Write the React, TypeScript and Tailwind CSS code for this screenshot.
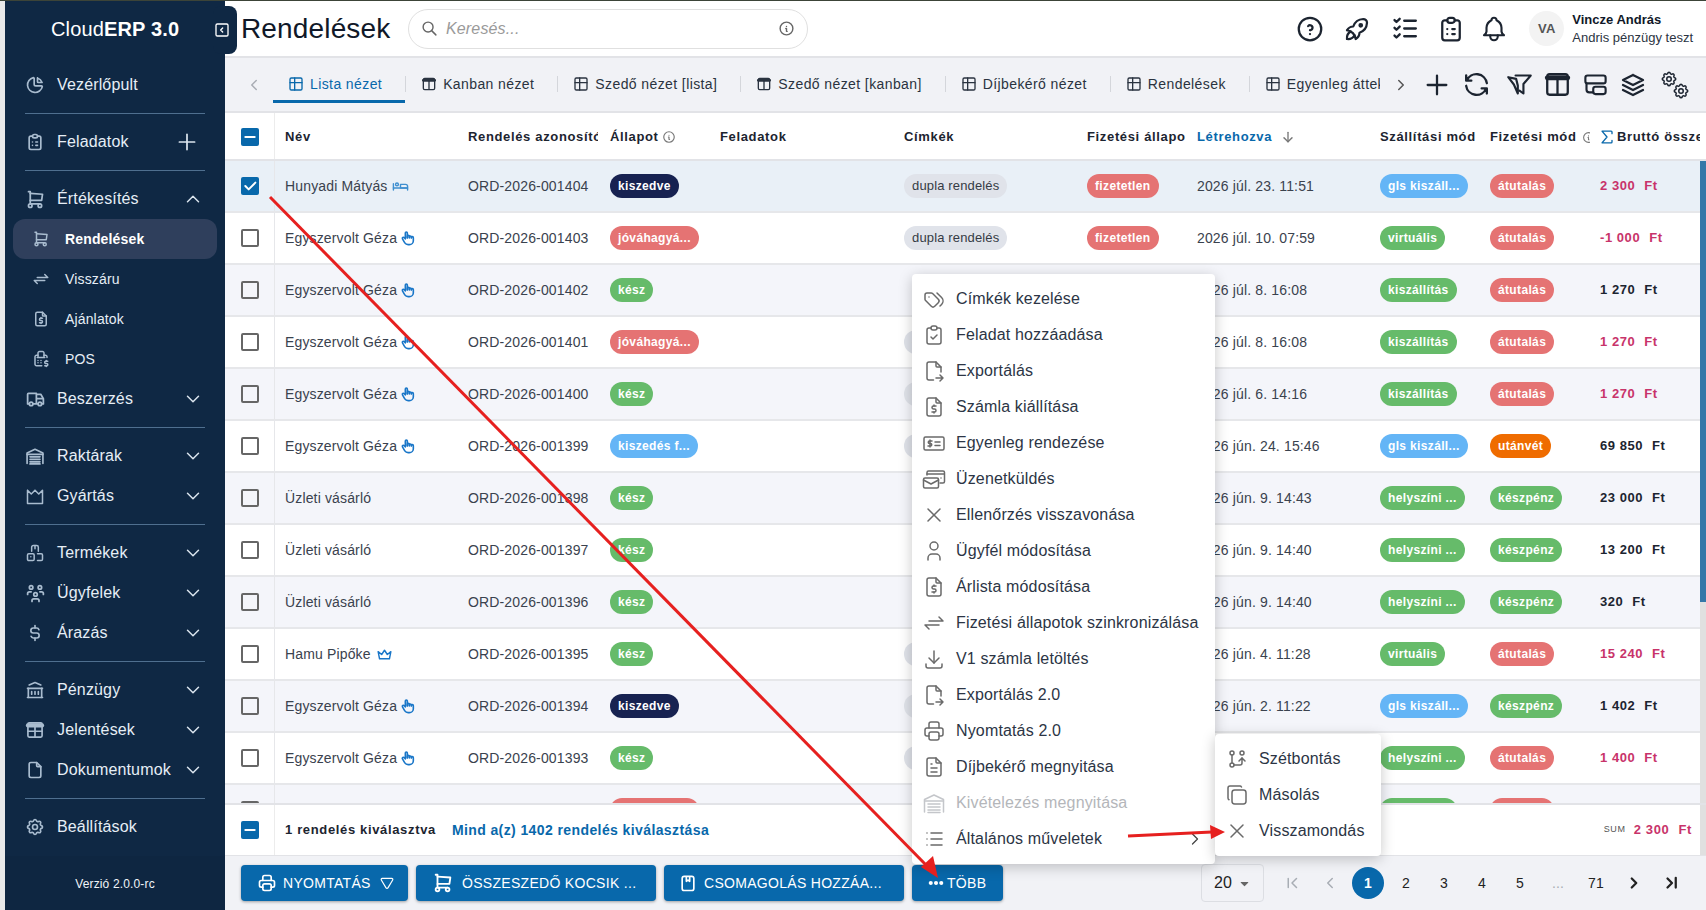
import type { ReactNode } from "react";
import {
  TbBed, TbBell, TbBuildingBank, TbCheck, TbChartPie, TbChevronDown, TbChevronLeft,
  TbChevronLeftPipe, TbChevronRight, TbChevronRightPipe, TbChevronUp, TbClipboardCheck, TbClipboardList, TbCopy, TbCrown,
  TbCurrencyDollar, TbArrowDown, TbArrowsExchange, TbCashRegister, TbDots, TbFile, TbFileDollar, TbFileExport, TbFileText,
  TbGitBranch, TbHandFinger, TbHelpCircle, TbInfoCircle, TbList, TbListCheck,
  TbMinus, TbPlus, TbPrinter, TbRefresh, TbRocket, TbSearch, TbSettings, TbShoppingCart,
  TbSquareChevronLeft, TbStack2, TbTable, TbTags, TbTruck, TbUser, TbUsersGroup, TbX, TbDownload, TbCaretDownFilled,
  TbTriangleInverted, TbSum,
} from "react-icons/tb";

const Svg = ({ size, children, width = 2 }: { size: number; children: ReactNode; width?: number }) => (
  <svg width={size} height={size} viewBox="0 0 24 24" fill="none" stroke="currentColor" strokeWidth={width} strokeLinecap="round" strokeLinejoin="round">
    {children}
  </svg>
);

const WarehouseIcon = ({ size, width }: { size: number; width?: number }) => (
  <Svg size={size} width={width}>
    <path d="M2.5 21V8.5L12 4l9.500 4.500V21" />
    <path d="M2.500 10h19M6 13h12M6 16h12M6 19h12M6 21.500h12" />
  </Svg>
);

const FactoryIcon = ({ size }: { size: number }) => (
  <Svg size={size} width={1.8}>
    <path d="M3 5v16h18V5l-4.500 4.500L12 5 7.500 9.500z" />
  </Svg>
);

const BoxesIcon = ({ size }: { size: number }) => (
  <Svg size={size} width={1.8}>
    <rect x="3" y="13" width="8" height="8" rx="1.500" />
    <path d="M15 13h4.500a1.500 1.500 0 0 1 1.500 1.500v5a1.500 1.500 0 0 1-1.500 1.500H15" />
    <path d="M8 10V5a2 2 0 0 1 2-2h4a2 2 0 0 1 2 2v5" />
    <path d="M7 16.500h0M12 3v4" />
  </Svg>
);

const GridIcon = ({ size }: { size: number }) => (
  <Svg size={size}>
    <rect x="3.500" y="3.500" width="17" height="17" rx="1.500" fill="none" />
    <path d="M3.500 6.500h17" strokeWidth="5" />
    <path d="M3.500 13.500h17M12 6.500v14" />
  </Svg>
);

const ColumnsIcon = ({ size, width }: { size: number; width?: number }) => (
  <Svg size={size} width={width}>
    <rect x="3.500" y="3.500" width="17" height="17" rx="2" />
    <path d="M3.500 6.500h17" strokeWidth="4" />
    <path d="M12 8v12" />
  </Svg>
);

const SplitFilterIcon = ({ size }: { size: number }) => (
  <Svg size={size} width={1.9}>
    <path d="M8.500 4H22l-6.500 7.500V20l-3.500-2.500" />
    <path d="M2 5.500l7 1.500 1.500 6v7l-3.500-8z" />
  </Svg>
);

const BlocksIcon = ({ size }: { size: number }) => (
  <Svg size={size} width={1.9}>
    <rect x="3" y="4" width="18" height="7" rx="2" />
    <rect x="10" y="14" width="11" height="6.500" rx="2" />
    <path d="M4 11v5.500a2.500 2.500 0 0 0 2.500 2.500H10" />
  </Svg>
);

const BalanceIcon = ({ size }: { size: number }) => (
  <Svg size={size} width={1.5}>
    <rect x="2" y="6" width="20" height="13" rx="1.500" />
    <path d="M10 10H7.500a1.200 1.200 0 0 0 0 2.500h1a1.200 1.200 0 0 1 0 2.500H6M8 9v7M13 11h5M13 14.500h5" />
  </Svg>
);

const MessagesIcon = ({ size }: { size: number }) => (
  <Svg size={size} width={1.5}>
    <path d="M5 8V5.500A1.500 1.500 0 0 1 6.500 4H21a1.500 1.500 0 0 1 1.500 1.500v9A1.500 1.500 0 0 1 21 16h-3" />
    <path d="M5 7h17" />
    <rect x="1.500" y="11" width="15" height="10" rx="1.500" />
    <path d="M1.500 13l7.500 4 7.500-4M19 11h0" />
  </Svg>
);

const NavItem = ({ icon, label, chevron, plus }: { icon: ReactNode; label: string; chevron?: "up" | "down"; plus?: boolean }) => (
  <div className="flex h-10 items-center pl-5 pr-[21px] text-[16px] text-[#e6eef6]">
    <span className="flex w-[32px] shrink-0 text-[#a9bccf]">{icon}</span>
    <span className="flex-1 whitespace-nowrap">{label}</span>
    {chevron === "down" && <TbChevronDown size={22} strokeWidth={1.6} className="text-[#dbe5ee]" />}
    {chevron === "up" && <TbChevronUp size={22} strokeWidth={1.6} className="text-[#dbe5ee]" />}
    {plus && <TbPlus size={26} strokeWidth={1.6} className="mr-[4px] text-[#dbe5ee]" />}
  </div>
);

const SubItem = ({ icon, label, active }: { icon: ReactNode; label: string; active?: boolean }) => (
  <div className={`mx-2 flex h-10 items-center rounded-xl pl-[19px] text-[14px] ${active ? "bg-[#2f3f5c] font-bold text-white" : "text-[#e6eef6]"}`}>
    <span className="flex w-[33px] shrink-0 text-[#a9bccf]">{icon}</span>
    {label}
  </div>
);

const Divider = () => <div className="mx-5 my-2 border-t border-[#4f6f8f]" />;

function Sidebar() {
  return (
    <aside className="relative flex w-[220px] shrink-0 flex-col bg-[#0f2844]">
      <div className="flex h-[64px] shrink-0 items-start pl-[46px] pt-[16px] text-[20px] leading-6 text-white">
        Cloud<b>ERP 3.0</b>
      </div>
      <div className="absolute right-[-12px] top-[5px] flex h-[48px] w-[24px] items-center justify-end rounded-lg bg-[#0f2844] pr-[7px] text-white">
        <TbSquareChevronLeft size={16} />
      </div>
      <NavItem icon={<TbChartPie size={20} />} label="Vezérlőpult" />
      <Divider />
      <NavItem icon={<TbClipboardList size={20} />} label="Feladatok" plus />
      <Divider />
      <NavItem icon={<TbShoppingCart size={21} />} label="Értékesítés" chevron="up" />
      <SubItem icon={<TbShoppingCart size={18} />} label="Rendelések" active />
      <SubItem icon={<TbArrowsExchange size={18} />} label="Visszáru" />
      <SubItem icon={<TbFileDollar size={18} />} label="Ajánlatok" />
      <SubItem icon={<TbCashRegister size={18} />} label="POS" />
      <NavItem icon={<TbTruck size={21} />} label="Beszerzés" chevron="down" />
      <Divider />
      <NavItem icon={<WarehouseIcon size={20} />} label="Raktárak" chevron="down" />
      <NavItem icon={<FactoryIcon size={20} />} label="Gyártás" chevron="down" />
      <Divider />
      <NavItem icon={<BoxesIcon size={20} />} label="Termékek" chevron="down" />
      <NavItem icon={<TbUsersGroup size={21} />} label="Ügyfelek" chevron="down" />
      <NavItem icon={<TbCurrencyDollar size={20} />} label="Árazás" chevron="down" />
      <Divider />
      <NavItem icon={<TbBuildingBank size={20} />} label="Pénzügy" chevron="down" />
      <NavItem icon={<GridIcon size={20} />} label="Jelentések" chevron="down" />
      <NavItem icon={<TbFile size={20} />} label="Dokumentumok" chevron="down" />
      <Divider />
      <NavItem icon={<TbSettings size={20} />} label="Beállítások" />
      <div className="mt-[9px] flex flex-1 items-center justify-center bg-[#0e2641] pt-[2px] text-[12px] text-[#f0f4f8]">
        Verzió 2.0.0-rc
      </div>
    </aside>
  );
}

function TopBar() {
  return (
    <header className="flex h-[57px] shrink-0 items-center border-b-2 border-[#e2e3e7] bg-white pl-4">
      <h1 className="w-[167px] text-[28px] text-[#101828]">Rendelések</h1>
      <div className="flex h-10 w-[400px] items-center rounded-full border border-[#e0e0e0] px-3">
        <TbSearch size={17} className="text-[#666]" />
        <span className="ml-[8px] flex-1 text-[16px] italic text-[#9a9a9a]">Keresés...</span>
        <TbInfoCircle size={17} className="text-[#666]" />
      </div>
      <div className="ml-auto flex items-center pr-[13px] text-[#1c2430]">
        <TbHelpCircle size={30} strokeWidth={1.8} />
        <TbRocket size={30} strokeWidth={1.8} className="ml-[17px]" />
        <TbListCheck size={31} strokeWidth={1.8} className="ml-[18px]" />
        <TbClipboardList size={30} strokeWidth={1.8} className="ml-[15px]" />
        <TbBell size={30} strokeWidth={1.7} className="ml-[13px]" />
        <div className="ml-[20px] flex size-[35px] items-center justify-center rounded-full bg-[#f3f3f3] text-[13px] font-bold text-[#555]">VA</div>
        <div className="ml-[8px] text-[13px] leading-[18px] tracking-normal">
          <div className="font-bold text-[#101828]">Vincze András</div>
          <div className="text-[#2b3442]">Andris pénzügy teszt</div>
        </div>
      </div>
    </header>
  );
}

const Tab = ({ icon, label, active }: { icon: ReactNode; label: string; active?: boolean }) => (
  <div className={`flex h-[44px] shrink-0 items-center gap-[6px] whitespace-nowrap border-b-[3px] pl-[15px] pr-[23px] pt-[9px] text-[14px] tracking-[0.4px] ${active ? "border-[#0868ab] text-[#0868ab]" : "border-transparent text-[#2a3340]"}`}>
    {icon}
    {label}
  </div>
);

const Sep = () => <div className="mt-[6px] h-4 w-px shrink-0 bg-[#d4d6db]" />;

function Tabs() {
  return (
    <div className="flex h-[55px] shrink-0 items-center border-b-2 border-[#e2e3e7] bg-[#f1f2f6] pl-[20px] pr-[16px]">
      <TbChevronLeft size={18} className="shrink-0 text-[#a9adb4]" />
      <div className="ml-[10px] mt-[1px] flex h-[44px] w-[1107px] items-center self-start overflow-hidden">
        <Tab active icon={<TbTable size={16} />} label="Lista nézet" />
        <Sep />
        <Tab icon={<ColumnsIcon size={16} />} label="Kanban nézet" />
        <Sep />
        <Tab icon={<TbTable size={16} />} label="Szedő nézet [lista]" />
        <Sep />
        <Tab icon={<ColumnsIcon size={16} />} label="Szedő nézet [kanban]" />
        <Sep />
        <Tab icon={<TbTable size={16} />} label="Díjbekérő nézet" />
        <Sep />
        <Tab icon={<TbTable size={16} />} label="Rendelések" />
        <Sep />
        <Tab icon={<TbTable size={16} />} label="Egyenleg áttekintés" />
      </div>
      <TbChevronRight size={18} className="ml-[12px] shrink-0 text-[#555]" />
      <div className="ml-auto flex items-center gap-[13px] text-[#1c2430]">
        <TbPlus size={32} strokeWidth={1.7} className="-mx-[3px]" />
        <TbRefresh size={31} strokeWidth={1.8} className="-mx-[2px]" />
        <div className="-mr-[3px] ml-[3px]"><SplitFilterIcon size={27} /></div>
        <ColumnsIcon size={29} width={1.9} />
        <div className="-ml-[3px]"><BlocksIcon size={27} /></div>
        <TbStack2 size={30} strokeWidth={1.8} className="-ml-[4px]" />
        <div className="relative -ml-[1px] size-[30px]">
          <TbSettings size={18} className="absolute left-0 top-0" />
          <TbSettings size={18} className="absolute bottom-0 right-0" />
        </div>
      </div>
    </div>
  );
}

type PillTone = "navy" | "red" | "green" | "blue" | "orange";

const toneClass: Record<PillTone, string> = {
  navy: "bg-[#172251]",
  red: "bg-[#e57373]",
  green: "bg-[#66bb6a]",
  blue: "bg-[#64b5f6]",
  orange: "bg-[#ef6c00]",
};

const Pill = ({ tone, text }: { tone: PillTone; text: string }) => (
  <span className={`inline-flex h-6 items-center whitespace-nowrap rounded-full px-2 text-[12px] font-bold tracking-[0.35px] text-white ${toneClass[tone]}`}>{text}</span>
);

const Tag = () => (
  <span className="inline-flex h-6 items-center whitespace-nowrap rounded-full bg-[#e0e3ea] px-2 text-[13px] text-[#353b45]">dupla rendelés</span>
);

const Check = ({ state }: { state?: "on" | "mixed" }) =>
  state ? (
    <span className="flex size-[18px] items-center justify-center rounded-[2px] bg-[#0868ab] text-white">
      {state === "on" ? <TbCheck size={16} strokeWidth={3} /> : <TbMinus size={16} strokeWidth={3} />}
    </span>
  ) : (
    <span className="size-[18px] rounded-[2px] border-2 border-[#666]" />
  );

type OrderRow = {
  name: string;
  mark: "bed" | "hand" | "crown" | null;
  id: string;
  status: [PillTone, string];
  tag?: boolean;
  unpaid?: boolean;
  date: string;
  ship: [PillTone, string];
  pay: [PillTone, string];
  total: string;
  red: boolean;
};

const geza = "Egyszervolt Géza";
const uzleti = "Üzleti vásárló";
const approve: [PillTone, string] = ["red", "jóváhagyá..."];
const ready: [PillTone, string] = ["green", "kész"];
const picked: [PillTone, string] = ["navy", "kiszedve"];
const gls: [PillTone, string] = ["blue", "gls kiszáll..."];
const delivery: [PillTone, string] = ["green", "kiszállítás"];
const onsite: [PillTone, string] = ["green", "helyszíni ..."];
const virtual: [PillTone, string] = ["green", "virtuális"];
const transfer: [PillTone, string] = ["red", "átutalás"];
const cash: [PillTone, string] = ["green", "készpénz"];

const rows: OrderRow[] = [
  { name: "Hunyadi Mátyás", mark: "bed", id: "001404", status: picked, tag: true, unpaid: true, date: "2026 júl. 23. 11:51", ship: gls, pay: transfer, total: "2 300", red: true },
  { name: geza, mark: "hand", id: "001403", status: approve, tag: true, unpaid: true, date: "2026 júl. 10. 07:59", ship: virtual, pay: transfer, total: "-1 000", red: true },
  { name: geza, mark: "hand", id: "001402", status: ready, date: "2026 júl. 8. 16:08", ship: delivery, pay: transfer, total: "1 270", red: false },
  { name: geza, mark: "hand", id: "001401", status: approve, tag: true, date: "2026 júl. 8. 16:08", ship: delivery, pay: transfer, total: "1 270", red: true },
  { name: geza, mark: "hand", id: "001400", status: ready, tag: true, date: "2026 júl. 6. 14:16", ship: delivery, pay: transfer, total: "1 270", red: true },
  { name: geza, mark: "hand", id: "001399", status: ["blue", "kiszedés f..."], tag: true, date: "2026 jún. 24. 15:46", ship: gls, pay: ["orange", "utánvét"], total: "69 850", red: false },
  { name: uzleti, mark: null, id: "001398", status: ready, date: "2026 jún. 9. 14:43", ship: onsite, pay: cash, total: "23 000", red: false },
  { name: uzleti, mark: null, id: "001397", status: ready, date: "2026 jún. 9. 14:40", ship: onsite, pay: cash, total: "13 200", red: false },
  { name: uzleti, mark: null, id: "001396", status: ready, date: "2026 jún. 9. 14:40", ship: onsite, pay: cash, total: "320", red: false },
  { name: "Hamu Pipőke", mark: "crown", id: "001395", status: ready, tag: true, date: "2026 jún. 4. 11:28", ship: virtual, pay: transfer, total: "15 240", red: true },
  { name: geza, mark: "hand", id: "001394", status: picked, tag: true, date: "2026 jún. 2. 11:22", ship: gls, pay: cash, total: "1 402", red: false },
  { name: geza, mark: "hand", id: "001393", status: ready, tag: true, date: "2026 máj. 29. 10:12", ship: onsite, pay: transfer, total: "1 400", red: true },
  { name: geza, mark: "hand", id: "001392", status: approve, date: "2026 máj. 28. 09:30", ship: delivery, pay: transfer, total: "1 270", red: true },
];

const gridCols = "grid grid-cols-[50px_183px_142px_110px_184px_183px_110px_183px_110px_110px_110px]";

const cell = "flex items-center overflow-hidden whitespace-nowrap pl-[10px]";

function TableHead() {
  return (
    <div className={`${gridCols} h-[48px] shrink-0 border-b-2 border-[#e2e3e7] bg-white text-[13px] font-bold tracking-[0.65px] text-[#1c2430]`}>
      <div className="flex items-center justify-center border-r border-[#ececec] pt-[2px]"><Check state="mixed" /></div>
      <div className={`${cell} pt-[2px]`}>Név</div>
      <div className="mr-[2px] flex items-center overflow-hidden whitespace-nowrap pl-[10px] pt-[2px]">Rendelés azonosító</div>
      <div className={`${cell} pt-[2px]`}>Állapot<TbInfoCircle size={14} className="ml-[3px] text-[#777]" /></div>
      <div className={`${cell} pt-[2px]`}>Feladatok</div>
      <div className={`${cell} pt-[2px]`}>Címkék</div>
      <div className="mr-[2px] flex items-center overflow-hidden whitespace-nowrap pl-[10px] pt-[2px]">Fizetési állapot</div>
      <div className={`${cell} pt-[2px] text-[#0868ab]`}>Létrehozva<TbArrowDown size={16} className="ml-[8px] text-[#777]" /></div>
      <div className={`${cell} pt-[2px]`}>Szállítási mód</div>
      <div className={`${cell} pt-[2px]`}>Fizetési mód<TbInfoCircle size={13} className="ml-[5px] shrink-0 text-[#777]" /></div>
      <div className={`${cell} pt-[2px]`}><TbSum size={20} strokeWidth={1.6} className="-ml-[3px] shrink-0 text-[#0868ab]" />Bruttó össze</div>
    </div>
  );
}

const Mark = ({ kind }: { kind: OrderRow["mark"] }) => {
  if (kind === "bed") return <TbBed size={17} className="ml-[5px] text-[#3f8fd0]" />;
  if (kind === "hand") return <TbHandFinger size={16} strokeWidth={2.4} className="ml-[3px] text-[#1976c8]" />;
  if (kind === "crown") return <TbCrown size={17} className="ml-[5px] text-[#1976c8]" />;
  return null;
};

function TableRow({ row, index }: { row: OrderRow; index: number }) {
  const bg = index === 0 ? "bg-[#e9f0f7]" : index % 2 === 0 ? "bg-[#f4f5fa]" : "bg-white";
  return (
    <div className={`${gridCols} h-[52px] shrink-0 border-b-2 border-[#e6e7ea] text-[14px] text-[#3a424e] ${bg}`}>
      <div className="flex items-center justify-center border-r border-[#e6e7ea]"><Check state={index === 0 ? "on" : undefined} /></div>
      <div className={cell}>{row.name}<Mark kind={row.mark} /></div>
      <div className={cell}>ORD-2026-{row.id}</div>
      <div className={cell}><Pill tone={row.status[0]} text={row.status[1]} /></div>
      <div className={cell} />
      <div className={cell}>{row.tag && <Tag />}</div>
      <div className={cell}>{row.unpaid && <Pill tone="red" text="fizetetlen" />}</div>
      <div className={cell}>{row.date}</div>
      <div className={cell}><Pill tone={row.ship[0]} text={row.ship[1]} /></div>
      <div className={cell}><Pill tone={row.pay[0]} text={row.pay[1]} /></div>
      <div className={`${cell} text-[13px] font-bold tracking-[0.55px] ${row.red ? "text-[#c8336a]" : "text-[#1c2430]"}`}>
        {row.total}<span className="ml-[9px]">Ft</span>
      </div>
    </div>
  );
}

function SummaryRow() {
  return (
    <div className="flex h-[52px] shrink-0 items-center border-t-2 border-[#e2e3e7] bg-white text-[13px] font-bold tracking-[0.65px]">
      <div className="flex h-full w-[50px] items-center justify-center border-r border-[#ececec]"><Check state="mixed" /></div>
      <span className="ml-[10px] text-[#1c2430]">1 rendelés kiválasztva</span>
      <span className="ml-4 text-[14px] tracking-[0.4px] text-[#0868ab]">Mind a(z) 1402 rendelés kiválasztása</span>
      <span className="ml-auto mr-[8px] text-[9px] font-normal text-[#555]">SUM</span>
      <span className="text-[#c8336a]">2 300<span className="ml-[9px]">Ft</span></span>
      <div className="ml-[8px] h-full w-[6px] bg-[#e0e0e0]" />
    </div>
  );
}

const ActionButton = ({ icon, label, box, trail }: { icon: ReactNode; label: string; box: string; trail?: ReactNode }) => (
  <button className={`flex h-9 items-center rounded bg-[#0868ab] text-[14px] tracking-[0.3px] text-white shadow-[0_1px_3px_rgba(0,0,0,0.35)] ${box}`}>
    {icon}
    <span className="whitespace-nowrap">{label}</span>
    {trail}
  </button>
);

const PageNum = ({ children, muted, active }: { children: ReactNode; muted?: boolean; active?: boolean }) => (
  <div className="flex w-[38px] justify-center text-[14px]">
    <span className={`flex size-8 items-center justify-center rounded-full ${active ? "bg-[#0868ab] font-bold text-white" : muted ? "text-[#a8adb4]" : "text-[#222]"}`}>{children}</span>
  </div>
);

function BottomBar() {
  return (
    <div className="flex h-[55px] shrink-0 items-center gap-2 border-t border-[#e2e3e7] bg-[#f1f2f6] pl-4">
      <ActionButton box="w-[167px] gap-[6px] pl-[16px]" icon={<TbPrinter size={20} />} label="NYOMTATÁS" trail={<TbTriangleInverted size={14} className="ml-[3px]" />} />
      <ActionButton box="w-[240px] gap-[8px] pl-[16px]" icon={<TbShoppingCart size={22} />} label="ÖSSZESZEDŐ KOCSIK ..." />
      <ActionButton box="w-[240px] gap-[6px] pl-[14px]" icon={
        <svg width="20" height="20" viewBox="0 0 24 24" fill="none" stroke="currentColor" strokeWidth="2" strokeLinejoin="round">
          <rect x="5" y="4" width="14" height="17" rx="2.5" />
          <path d="M10 4v6l2-1.5 2 1.5V4" />
        </svg>
      } label="CSOMAGOLÁS HOZZÁA..." />
      <ActionButton box="w-[91px] gap-[2px] pl-[15px]" icon={<TbDots size={18} strokeWidth={3.5} />} label="TÖBB" />
      <div className="ml-[190px] flex h-[38px] w-[63px] items-center justify-center gap-[6px] rounded border border-[#dcdee3] text-[16px] text-[#222]">
        20<TbCaretDownFilled size={13} className="text-[#666]" />
      </div>
      <div className="ml-[1px] flex items-center">
        <PageNum muted><TbChevronLeftPipe size={18} /></PageNum>
        <PageNum muted><TbChevronLeft size={18} /></PageNum>
        <PageNum active>1</PageNum>
        <PageNum>2</PageNum>
        <PageNum>3</PageNum>
        <PageNum>4</PageNum>
        <PageNum>5</PageNum>
        <PageNum muted>...</PageNum>
        <PageNum>71</PageNum>
        <PageNum><TbChevronRight size={18} strokeWidth={3} /></PageNum>
        <PageNum><TbChevronRightPipe size={18} strokeWidth={3} /></PageNum>
      </div>
    </div>
  );
}

const MenuItem = ({ icon, label, disabled, trail }: { icon: ReactNode; label: string; disabled?: boolean; trail?: ReactNode }) => (
  <div className={`flex h-9 items-center whitespace-nowrap pl-[10px] text-[16px] ${disabled ? "text-[#b4b6ba]" : "text-[#2c3545]"}`}>
    <span className={`flex w-[34px] shrink-0 ${disabled ? "text-[#c4c6ca]" : "text-[#6a6a6a]"}`}>{icon}</span>
    <span className="flex-1">{label}</span>
    {trail}
  </div>
);

function ActionsMenu() {
  return (
    <div className="absolute left-[912px] top-[273px] z-10 w-[303px] rounded bg-white py-[7px] shadow-[0_3px_14px_rgba(0,0,0,0.22)]">
      <MenuItem icon={<TbTags size={24} strokeWidth={1.5} />} label="Címkék kezelése" />
      <MenuItem icon={<TbClipboardCheck size={24} strokeWidth={1.5} />} label="Feladat hozzáadása" />
      <MenuItem icon={<TbFileExport size={24} strokeWidth={1.5} />} label="Exportálás" />
      <MenuItem icon={<TbFileDollar size={24} strokeWidth={1.5} />} label="Számla kiállítása" />
      <MenuItem icon={<BalanceIcon size={24} />} label="Egyenleg rendezése" />
      <MenuItem icon={<MessagesIcon size={24} />} label="Üzenetküldés" />
      <MenuItem icon={<TbX size={24} strokeWidth={1.5} />} label="Ellenőrzés visszavonása" />
      <MenuItem icon={<TbUser size={24} strokeWidth={1.5} />} label="Ügyfél módosítása" />
      <MenuItem icon={<TbFileDollar size={24} strokeWidth={1.5} />} label="Árlista módosítása" />
      <MenuItem icon={<TbArrowsExchange size={24} strokeWidth={1.5} />} label="Fizetési állapotok szinkronizálása" />
      <MenuItem icon={<TbDownload size={24} strokeWidth={1.5} />} label="V1 számla letöltés" />
      <MenuItem icon={<TbFileExport size={24} strokeWidth={1.5} />} label="Exportálás 2.0" />
      <MenuItem icon={<TbPrinter size={24} strokeWidth={1.5} />} label="Nyomtatás 2.0" />
      <MenuItem icon={<TbFileText size={24} strokeWidth={1.5} />} label="Díjbekérő megnyitása" />
      <MenuItem disabled icon={<WarehouseIcon size={24} width={1.5} />} label="Kivételezés megnyitása" />
      <MenuItem icon={<TbList size={24} strokeWidth={1.5} />} label="Általános műveletek" trail={<TbChevronRight size={20} strokeWidth={1.5} className="mr-[10px] text-[#444]" />} />
    </div>
  );
}

function SubMenu() {
  return (
    <div className="absolute left-[1215px] top-[733px] z-10 w-[166px] rounded bg-white py-[7px] shadow-[0_3px_14px_rgba(0,0,0,0.22)]">
      <MenuItem icon={<TbGitBranch size={24} strokeWidth={1.5} />} label="Szétbontás" />
      <MenuItem icon={<TbCopy size={24} strokeWidth={1.5} />} label="Másolás" />
      <MenuItem icon={<TbX size={24} strokeWidth={1.5} />} label="Visszamondás" />
    </div>
  );
}

export default function App() {
  return (
    <div className="relative flex h-[910px] w-[1706px] overflow-hidden border-t border-[#3c4438] bg-[#e9e9e9] font-['Liberation_Sans',Arial,sans-serif] tracking-[0.15px]">
      <div className="w-[5px] shrink-0" />
      <Sidebar />
      <main className="flex min-w-0 flex-1 flex-col bg-white">
        <TopBar />
        <Tabs />
        <TableHead />
        <div className="relative min-h-0 flex-1 overflow-hidden">
          {rows.map((row, i) => (
            <TableRow key={row.id} row={row} index={i} />
          ))}
          <div className="absolute bottom-0 right-0 top-0 w-[6px] bg-[#e0e0e0]" />
          <div className="absolute right-0 top-0 h-[441px] w-[6px] bg-[#3477a8]" />
        </div>
        <SummaryRow />
        <BottomBar />
      </main>
      <ActionsMenu />
      <SubMenu />
      <svg className="pointer-events-none absolute left-0 top-[-1px] z-20" width="1706" height="910">
        <line x1="270" y1="197" x2="928" y2="867" stroke="#e6201f" strokeWidth="3" />
        <polygon points="938,878 921,867 933,856" fill="#e6201f" />
        <line x1="1128" y1="836" x2="1212" y2="832" stroke="#e6201f" strokeWidth="3" />
        <polygon points="1225,832 1210,825 1211,839" fill="#e6201f" />
      </svg>
    </div>
  );
}
